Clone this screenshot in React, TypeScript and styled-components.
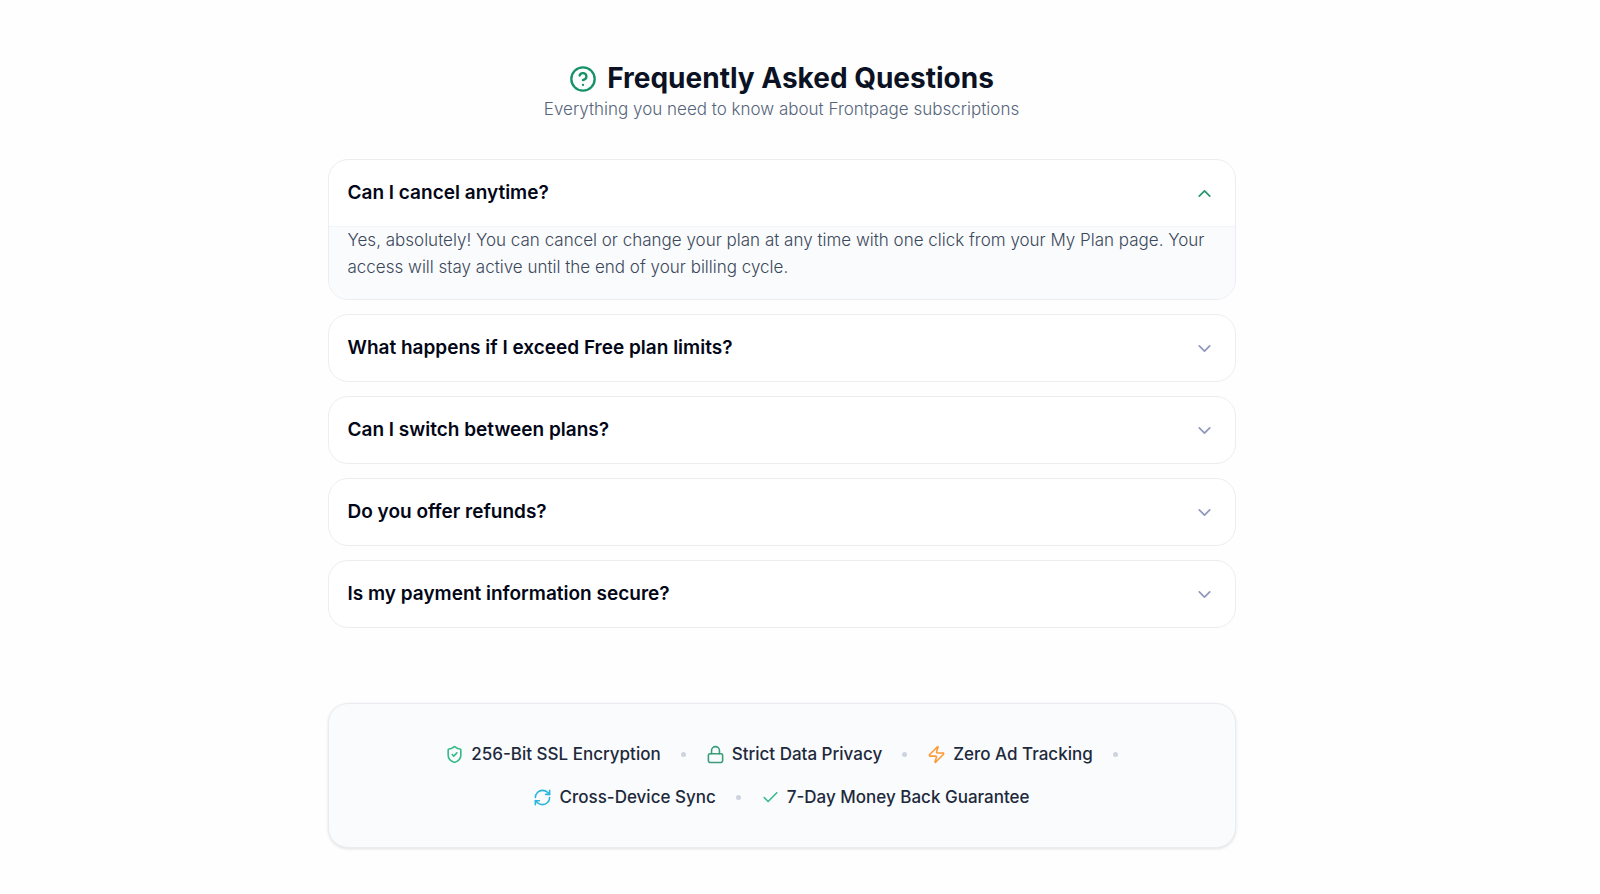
import React, { useState } from "react";
import styled, { createGlobalStyle } from "styled-components";
import {
  Check,
  ChevronDown,
  ChevronUp,
  CircleQuestionMark,
  Lock,
  RefreshCw,
  ShieldCheck,
  Zap,
} from "lucide-react";

const GlobalStyle = createGlobalStyle`
  *, *::before, *::after { box-sizing: border-box; }
  body {
    margin: 0;
    background: #fefefe;
    color: #020617;
    font-family: Inter, "Liberation Sans", sans-serif;
  }
`;

const Page = styled.main`
  padding: 60px 57px 46px 20px;
`;

const Content = styled.div`
  max-width: 908px;
  margin: 0 auto;
`;

const Header = styled.header`
  display: flex;
  flex-direction: column;
  align-items: center;
  margin-bottom: 37px;
  text-align: center;
`;

const Title = styled.h2`
  display: flex;
  align-items: center;
  gap: 10px;
  margin: 0;
  color: #0b1224;
  font-size: 28px;
  font-weight: 700;
  line-height: 37px;

  svg { color: #159267; }
`;

const Subtitle = styled.p`
  margin: 0;
  color: #56657c;
  font-size: 17px;
  font-weight: 300;
  line-height: 25px;
`;

const List = styled.div`
  display: flex;
  flex-direction: column;
  gap: 14px;
`;

const Item = styled.section`
  overflow: hidden;
  border: 1px solid #ebeef1;
  border-radius: 20px;
  background: #ffffff;
`;

const QuestionHeading = styled.h3`
  margin: 0;
`;

const QuestionButton = styled.button<{ $open: boolean }>`
  display: flex;
  align-items: center;
  justify-content: space-between;
  width: 100%;
  padding: 20px 20px 20px 19px;
  border: 0;
  background: transparent;
  color: #020617;
  font-family: inherit;
  font-size: 19px;
  font-weight: 600;
  line-height: 26px;
  text-align: left;
  cursor: pointer;

  svg { flex: none; color: ${(p) => (p.$open ? "#2c9470" : "#8f98bd")}; }
`;

const Answer = styled.p`
  margin: 0;
  padding: 0 20px 18px 19px;
  border-top: 1px solid #f1f5f9;
  background: #fafbfd;
  color: #3b485b;
  font-size: 17px;
  font-weight: 300;
  line-height: 27px;
`;

const TrustPanel = styled.ul`
  display: flex;
  flex-wrap: wrap;
  align-items: center;
  justify-content: center;
  gap: 17px 20px;
  margin: 75px 0 0;
  padding: 37px 82px;
  list-style: none;
  border: 1px solid #e9edf1;
  border-radius: 20px;
  background: #f9fbfd;
  box-shadow: 0 1px 3px rgba(15, 23, 42, 0.12);
`;

const TrustItem = styled.li<{ $color: string }>`
  display: flex;
  align-items: center;
  gap: 7px;
  color: #1e293b;
  font-size: 17px;
  font-weight: 500;
  line-height: 26px;

  svg { color: ${(p) => p.$color}; }
`;

const Dot = styled.li`
  width: 5px;
  height: 5px;
  border-radius: 50%;
  background: #cdd4df;
`;

const faqs = [
  {
    question: "Can I cancel anytime?",
    answer:
      "Yes, absolutely! You can cancel or change your plan at any time with one click from your My Plan page. Your access will stay active until the end of your billing cycle.",
  },
  { question: "What happens if I exceed Free plan limits?" },
  { question: "Can I switch between plans?" },
  { question: "Do you offer refunds?" },
  { question: "Is my payment information secure?" },
];

const trust = [
  { label: "256-Bit SSL Encryption", icon: ShieldCheck, color: "#34b987" },
  { label: "Strict Data Privacy", icon: Lock, color: "#3a9d78" },
  { label: "Zero Ad Tracking", icon: Zap, color: "#fb9b35" },
  { label: "Cross-Device Sync", icon: RefreshCw, color: "#29b6dc" },
  { label: "7-Day Money Back Guarantee", icon: Check, color: "#34b98a" },
];

export default function App() {
  const [open, setOpen] = useState(0);

  return (
    <>
      <GlobalStyle />
      <Page>
        <Content>
          <Header>
            <Title>
              <CircleQuestionMark size={28} strokeWidth={2} aria-hidden />
              Frequently Asked Questions
            </Title>
            <Subtitle>Everything you need to know about Frontpage subscriptions</Subtitle>
          </Header>

          <List>
            {faqs.map((faq, index) => {
              const isOpen = open === index;
              const Chevron = isOpen ? ChevronUp : ChevronDown;
              return (
                <Item key={faq.question}>
                  <QuestionHeading>
                    <QuestionButton
                      type="button"
                      $open={isOpen}
                      aria-expanded={isOpen}
                      onClick={() => setOpen(isOpen ? -1 : index)}
                    >
                      {faq.question}
                      <Chevron size={21} aria-hidden />
                    </QuestionButton>
                  </QuestionHeading>
                  {isOpen && faq.answer && <Answer>{faq.answer}</Answer>}
                </Item>
              );
            })}
          </List>

          <TrustPanel>
            {trust.map(({ label, icon: Icon, color }, index) => (
              <React.Fragment key={label}>
                {index > 0 && <Dot aria-hidden />}
                <TrustItem $color={color}>
                  <Icon size={19} aria-hidden />
                  {label}
                </TrustItem>
              </React.Fragment>
            ))}
          </TrustPanel>
        </Content>
      </Page>
    </>
  );
}
